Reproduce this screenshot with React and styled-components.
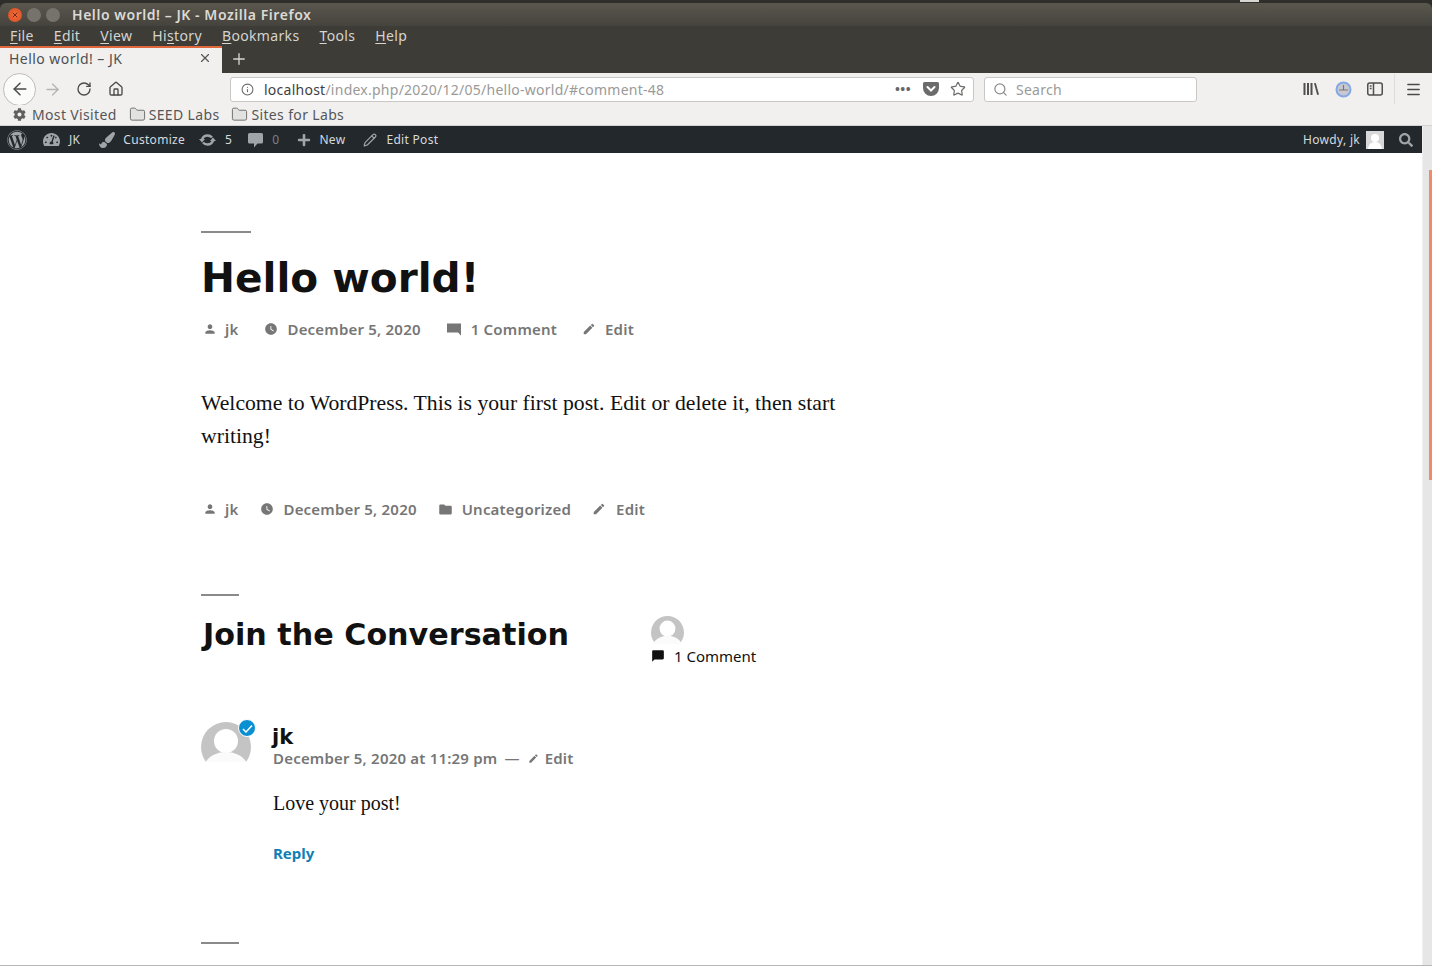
import styled, { createGlobalStyle } from 'styled-components'
import {
  ArrowLeft, ArrowRight, RotateCw, Home, Info, Star, Search, Menu, Plus, X, Folder, Pencil,
} from 'lucide-react'
import { FaWordpress, FaPaintBrush, FaTachometerAlt, FaPlus, FaSearch, FaCog } from 'react-icons/fa'
import { MdPerson, MdWatchLater, MdModeEdit, MdFolder, MdChatBubble } from 'react-icons/md'

const UI_FONT = '"Noto Sans", "Open Sans", sans-serif'
const HEAD_FONT = '"DejaVu Sans", "Noto Sans", sans-serif'
const SERIF = '"Liberation Serif", "Times New Roman", serif'

const GlobalStyle = createGlobalStyle`
  html, body { margin: 0; padding: 0; background: #fff; }
  body { font-family: ${UI_FONT}; overflow: hidden; }
  * { box-sizing: border-box; }
`

const Window = styled.div`
  width: 1432px;
  height: 966px;
  display: flex;
  flex-direction: column;
  overflow: hidden;
  background: #2f2e2b;
`

const TopStrip = styled.div`
  height: 3px;
  flex: none;
  padding-left: 1240px;
`

const TopSliver = styled.div`
  width: 19px;
  height: 2px;
  background: #d8d6d0;
`

const TitleBar = styled.div`
  height: 23px;
  flex: none;
  display: flex;
  align-items: center;
  padding: 1px 0 0 8px;
  border-radius: 6px 6px 0 0;
  background: linear-gradient(#5a574e, #45433d);
`

const WinButton = styled.span`
  width: 14px;
  height: 14px;
  border-radius: 50%;
  margin-right: 5px;
  display: flex;
  align-items: center;
  justify-content: center;
  color: ${p => (p.$close ? '#6e2a14' : '#4b4a44')};
  background: ${p => (p.$close ? 'radial-gradient(circle, #f0703f, #d9481c)' : '#75736c')};
`

const WindowTitle = styled.span`
  margin: 0 0 2px 7px;
  font-size: 14px;
  font-weight: 600;
  letter-spacing: 0.55px;
  color: #dcdad5;
  white-space: nowrap;
`

const MenuBar = styled.div`
  height: 20px;
  flex: none;
  display: flex;
  align-items: center;
  gap: 20px;
  padding: 0 0 2px 10px;
  background: #3d3c37;
`

const MenuItem = styled.span`
  font-size: 14px;
  letter-spacing: 0.35px;
  color: #d6d4cf;
  u { text-underline-offset: 2px; }
`

const TabRow = styled.div`
  height: 27px;
  flex: none;
  display: flex;
  align-items: stretch;
  background: #3d3c37;
`

const Tab = styled.div`
  width: 222px;
  display: flex;
  align-items: center;
  justify-content: space-between;
  padding: 0 10px 5px 9px;
  background: #f1f0ee;
  border-top: 2px solid #e0663c;
  font-size: 14px;
  letter-spacing: 0.45px;
  color: #4c4f55;
`

const NewTab = styled.div`
  margin-left: 8px;
  padding-bottom: 2px;
  display: flex;
  align-items: center;
  color: #d8d6d1;
`

const NavBar = styled.div`
  height: 32px;
  flex: none;
  display: flex;
  align-items: center;
  padding-left: 3px;
  background: #f1f0ee;
`

const BackButton = styled.span`
  width: 33px;
  height: 33px;
  border: 1px solid #bdbcb9;
  border-radius: 50%;
  background: #fbfbfa;
  display: flex;
  align-items: center;
  justify-content: center;
  color: #4a4a48;
`

const NavIcon = styled.span`
  width: ${p => p.$w || 32}px;
  margin-left: ${p => p.$ml || 0}px;
  display: flex;
  justify-content: center;
  color: ${p => p.$color || '#4a4a48'};
`

const Field = styled.div`
  height: 25px;
  width: ${p => p.$w}px;
  margin-left: ${p => p.$ml}px;
  display: flex;
  align-items: center;
  background: #fff;
  border: 1px solid #c9c8c5;
  border-radius: 3px;
  font-size: 14px;
  letter-spacing: 0.25px;
  color: #9a9a98;
`

const UrlText = styled.span`
  margin-left: 1px;
  flex: 1;
  b { font-weight: 400; color: #3f3f3f; }
`

const FieldIcon = styled.span`
  width: ${p => p.$w || 26}px;
  display: flex;
  justify-content: center;
  color: ${p => p.$color || '#6c6c6a'};
`

const Dots = styled.span`
  width: 32px;
  text-align: center;
  font-size: 13px;
  font-weight: 700;
  letter-spacing: 0.5px;
  color: #666;
  line-height: 10px;
`

const Divider = styled.span`
  width: 1px;
  height: 30px;
  margin-left: 3px;
  background: #dddcd9;
`

const BookmarksBar = styled.div`
  height: 21px;
  flex: none;
  display: flex;
  align-items: center;
  padding: 0 0 2px 13px;
  gap: 12px;
  background: #f1f0ee;
  border-bottom: 1px solid #d3d2cf;
`

const Bookmark = styled.span`
  display: flex;
  align-items: center;
  gap: ${p => p.$gap || 3}px;
  font-size: 14px;
  letter-spacing: 0.35px;
  color: #55565a;
  svg { color: #5f5f5d; }
`

const Lower = styled.div`
  flex: 1;
  min-height: 0;
  display: flex;
  background: #fff;
  border-bottom: 1px solid #b6b6b6;
`

const Main = styled.div`
  flex: 1;
  min-width: 0;
  display: flex;
  flex-direction: column;
`

const AdminBar = styled.div`
  height: 27px;
  flex: none;
  display: flex;
  align-items: center;
  justify-content: space-between;
  background: #23282d;
  padding: 0 9px 0 7px;
`

const AdminGroup = styled.div`
  display: flex;
  align-items: center;
`

const AdminItem = styled.span`
  display: flex;
  align-items: center;
  gap: ${p => p.$gap ?? 8}px;
  margin-right: ${p => p.$mr ?? 16}px;
  font-size: 12px;
  letter-spacing: 0.3px;
  color: ${p => (p.$dim ? '#7c8287' : '#d6dadd')};
  svg { color: #a0a5aa; }
`

const AdminAvatar = styled.span`
  display: flex;
  width: 18px;
  height: 18px;
  background: #d8d8d8;
  margin: 0 15px 0 6px;
  overflow: hidden;
`

const Page = styled.div`
  flex: 1;
  min-height: 0;
  padding: 78px 0 0 201px;
  overflow: hidden;
`

const Rule = styled.div`
  width: ${p => p.$w}px;
  height: 2px;
  margin-top: ${p => p.$mt || 0}px;
  background: #8a8a8a;
`

const PostTitle = styled.h1`
  margin: 20px 0 0 0;
  font-family: ${HEAD_FONT};
  font-size: 40.6px;
  line-height: 50px;
  font-weight: 700;
  color: #111;
`

const Meta = styled.div`
  height: 20px;
  margin-top: ${p => p.$mt}px;
  display: flex;
  align-items: center;
  padding-left: 2px;
  font-size: 15px;
  font-weight: 600;
  letter-spacing: 0.2px;
  color: #767676;
`

const MetaItem = styled.span`
  display: flex;
  align-items: center;
  gap: ${p => p.$gap}px;
  margin-right: ${p => p.$mr}px;
  white-space: nowrap;
`

const Paragraph = styled.p`
  width: 650px;
  margin: ${p => p.$mt}px 0 0;
  font-family: ${SERIF};
  font-size: ${p => p.$size}px;
  line-height: 33px;
  color: #111;
`

const ConversationHead = styled.div`
  display: flex;
  margin-top: 19px;
`

const SectionTitle = styled.h2`
  width: 450px;
  margin: 0;
  padding-left: 2px;
  font-family: ${HEAD_FONT};
  font-size: 30.2px;
  line-height: 40px;
  font-weight: 700;
  color: #111;
  white-space: nowrap;
`

const Discussion = styled.div`
  display: flex;
  flex-direction: column;
  padding-top: 1px;
`

const AvatarClip = styled.div`
  position: relative;
  width: ${p => p.$size}px;
  height: ${p => p.$h}px;
`

const Badge = styled.span`
  position: absolute;
  top: -3px;
  right: -5px;
  width: 18px;
  height: 18px;
  border-radius: 50%;
  background: #0a8fd3;
  border: 1px solid #fff;
  display: flex;
  align-items: center;
  justify-content: center;
`

const CommentCount = styled.div`
  display: flex;
  align-items: center;
  gap: 9px;
  margin-top: 2px;
  font-size: 15px;
  line-height: 20px;
  color: #111;
`

const Comment = styled.div`
  display: flex;
  gap: 22px;
  margin-top: 56px;
`

const CommentBody = styled.div`
  display: flex;
  flex-direction: column;
`

const Author = styled.div`
  height: 24px;
  margin: 2px 0 0 -1px;
  font-family: ${HEAD_FONT};
  font-size: 21px;
  line-height: 26px;
  font-weight: 700;
  color: #111;
`

const CommentMeta = styled.div`
  height: 20px;
  display: flex;
  align-items: center;
  font-size: 15px;
  font-weight: 600;
  letter-spacing: 0.2px;
  color: #767676;
`

const Dash = styled.span`
  margin: 0 8px 0 7px;
  font-weight: 400;
`

const EditLink = styled.span`
  display: flex;
  align-items: center;
  gap: 6px;
`

const Reply = styled.a`
  height: 20px;
  margin-top: 23px;
  font-size: 15px;
  line-height: 20px;
  font-weight: 700;
  color: #0f7fb5;
`

const ScrollTrack = styled.div`
  width: 10px;
  flex: none;
  padding: 44px 0 0 6px;
  background: #e6e6e6;
  border-left: 1px solid #f0f0f0;
`

const ScrollThumb = styled.div`
  width: 3px;
  height: 310px;
  background: #ee8b68;
`

function Avatar({ size, height, children }) {
  return (
    <AvatarClip $size={size} $h={height}>
      <svg width={size} height={height} viewBox={`0 0 50 ${(height / size) * 50}`}>
        <circle cx="25" cy="25" r="25" fill="#c4c4c4" />
        <circle cx="25" cy="19" r="12" fill="#fff" />
        <path d="M0 52 C2 37 13 30 25 30 C37 30 48 37 50 52 Z" fill="#fbfbfb" />
      </svg>
      {children}
    </AvatarClip>
  )
}

function PocketIcon() {
  return (
    <svg width="16" height="14" viewBox="0 0 16 14">
      <path d="M1.5 0 H14.5 A1.5 1.5 0 0 1 16 1.5 V6 A8 8 0 0 1 0 6 V1.5 A1.5 1.5 0 0 1 1.5 0 Z" fill="#6b6b6b" />
      <path d="M4.5 5 L8 8.5 L11.5 5" fill="none" stroke="#fff" strokeWidth="2" strokeLinecap="round" />
    </svg>
  )
}

function LibraryIcon() {
  return (
    <svg width="16" height="14" viewBox="0 0 16 14" fill="#4f4f4d">
      <rect x="0.5" y="1" width="2" height="12" />
      <rect x="4" y="1" width="2" height="12" />
      <rect x="7.5" y="1" width="2" height="12" />
      <path d="M11 1.3 L12.8 1 L16 12.6 L14.2 13 Z" />
    </svg>
  )
}

function SyncIcon() {
  return (
    <svg width="17" height="17" viewBox="0 0 17 17">
      <circle cx="8.5" cy="8.5" r="7" fill="#c8c8d0" stroke="#86a8e4" strokeWidth="2" />
      <path d="M8.5 4 V9 M4 9 H13" stroke="#77777a" strokeWidth="1.2" />
    </svg>
  )
}

function SidebarIcon() {
  return (
    <svg width="16" height="14" viewBox="0 0 16 14" fill="none" stroke="#4f4f4d" strokeWidth="1.5">
      <rect x="0.75" y="1" width="14.5" height="12" rx="2" />
      <path d="M6.5 1 V13" />
      <path d="M2.8 4 H4.6 M2.8 6.5 H4.6" />
    </svg>
  )
}

// wp admin "updates" loop, wider than it is tall
function UpdatesIcon() {
  return (
    <svg width="17" height="14" viewBox="0 0 17 14" fill="none">
      <path d="M3 6.5 C4 3.5 6 2.5 8.5 2.5 C10.5 2.5 12 3.3 13 4.5" stroke="currentColor" strokeWidth="2.4" />
      <path d="M14 7.5 C13 10.5 11 11.5 8.5 11.5 C6.5 11.5 5 10.7 4 9.5" stroke="currentColor" strokeWidth="2.4" />
      <path d="M0 6 L6 6 L3 9.5 Z M17 8 L11 8 L14 4.5 Z" fill="currentColor" />
    </svg>
  )
}

function AdminCommentIcon() {
  return (
    <svg width="15" height="16" viewBox="0 0 15 16" fill="currentColor">
      <path d="M1.5 1 H13.5 A1.5 1.5 0 0 1 15 2.5 V10 A1.5 1.5 0 0 1 13.5 11.5 H9.5 L6 15.5 V11.5 H1.5 A1.5 1.5 0 0 1 0 10 V2.5 A1.5 1.5 0 0 1 1.5 1 Z" />
    </svg>
  )
}

function PostCommentIcon() {
  return (
    <svg width="15" height="14" viewBox="0 0 15 14" fill="currentColor">
      <path d="M0 1.5 H14 V13.5 L11 10.5 H0 Z" />
    </svg>
  )
}

export default function App() {
  return (
    <Window>
      <GlobalStyle />
      <TopStrip><TopSliver /></TopStrip>
      <TitleBar>
        <WinButton $close><X size={8} strokeWidth={3} /></WinButton>
        <WinButton />
        <WinButton />
        <WindowTitle>Hello world! – JK - Mozilla Firefox</WindowTitle>
      </TitleBar>
      <MenuBar>
        <MenuItem><u>F</u>ile</MenuItem>
        <MenuItem><u>E</u>dit</MenuItem>
        <MenuItem><u>V</u>iew</MenuItem>
        <MenuItem>Hi<u>s</u>tory</MenuItem>
        <MenuItem><u>B</u>ookmarks</MenuItem>
        <MenuItem><u>T</u>ools</MenuItem>
        <MenuItem><u>H</u>elp</MenuItem>
      </MenuBar>
      <TabRow>
        <Tab>
          Hello world! – JK
          <X size={14} color="#555" />
        </Tab>
        <NewTab><Plus size={18} strokeWidth={1.8} /></NewTab>
      </TabRow>
      <NavBar>
        <BackButton><ArrowLeft size={20} strokeWidth={1.8} /></BackButton>
        <NavIcon $color="#b4b4b2"><ArrowRight size={19} strokeWidth={1.6} /></NavIcon>
        <NavIcon><RotateCw size={16} strokeWidth={2} /></NavIcon>
        <NavIcon><Home size={16} strokeWidth={2} /></NavIcon>
        <Field $w={744} $ml={98}>
          <FieldIcon $w={32}><Info size={13} /></FieldIcon>
          <UrlText><b>localhost</b>/index.php/2020/12/05/hello-world/#comment-48</UrlText>
          <Dots>•••</Dots>
          <FieldIcon $w={24}><PocketIcon /></FieldIcon>
          <FieldIcon $w={30}><Star size={16} strokeWidth={1.8} /></FieldIcon>
        </Field>
        <Field $w={213} $ml={10}>
          <FieldIcon $w={31} $color="#8c8c8c"><Search size={15} /></FieldIcon>
          Search
        </Field>
        <NavIcon $ml={98}><LibraryIcon /></NavIcon>
        <NavIcon><SyncIcon /></NavIcon>
        <NavIcon><SidebarIcon /></NavIcon>
        <Divider />
        <NavIcon $w={37}><Menu size={17} /></NavIcon>
      </NavBar>
      <BookmarksBar>
        <Bookmark $gap={6}><FaCog size={13} />Most Visited</Bookmark>
        <Bookmark><Folder size={17} strokeWidth={1.2} fill="#e2e2e0" />SEED Labs</Bookmark>
        <Bookmark><Folder size={17} strokeWidth={1.2} fill="#e2e2e0" />Sites for Labs</Bookmark>
      </BookmarksBar>
      <Lower>
        <Main>
          <AdminBar>
            <AdminGroup>
              <AdminItem><FaWordpress size={20} /></AdminItem>
              <AdminItem $gap={9} $mr={19}><FaTachometerAlt size={17} />JK</AdminItem>
              <AdminItem $mr={14}><FaPaintBrush size={16} />Customize</AdminItem>
              <AdminItem $gap={9} $mr={16}><UpdatesIcon />5</AdminItem>
              <AdminItem $dim $gap={9} $mr={18}><AdminCommentIcon />0</AdminItem>
              <AdminItem $mr={18}><FaPlus size={14} />New</AdminItem>
              <AdminItem $gap={9}><Pencil size={14} />Edit Post</AdminItem>
            </AdminGroup>
            <AdminGroup>
              <AdminItem $mr={0}>Howdy, jk</AdminItem>
              <AdminAvatar>
                <svg width="18" height="18" viewBox="0 0 18 18">
                  <circle cx="9" cy="7" r="4" fill="#fff" />
                  <path d="M2 18 C3 12 6 11 9 11 C12 11 15 12 16 18 Z" fill="#fff" />
                </svg>
              </AdminAvatar>
              <AdminItem $mr={0}><FaSearch size={14} /></AdminItem>
            </AdminGroup>
          </AdminBar>
          <Page>
            <Rule $w={50} />
            <PostTitle>Hello world!</PostTitle>
            <Meta $mt={16}>
              <MetaItem $gap={8} $mr={26}><MdPerson size={14} />jk</MetaItem>
              <MetaItem $gap={9} $mr={26}><MdWatchLater size={14} />December 5, 2020</MetaItem>
              <MetaItem $gap={9} $mr={25}><PostCommentIcon />1 Comment</MetaItem>
              <MetaItem $gap={9} $mr={0}><MdModeEdit size={14} />Edit</MetaItem>
            </Meta>
            <Paragraph $mt={48} $size={21.7}>
              Welcome to WordPress. This is your first post. Edit or delete it, then start writing!
            </Paragraph>
            <Meta $mt={46}>
              <MetaItem $gap={8} $mr={22}><MdPerson size={14} />jk</MetaItem>
              <MetaItem $gap={9} $mr={21}><MdWatchLater size={14} />December 5, 2020</MetaItem>
              <MetaItem $gap={9} $mr={21}><MdFolder size={15} />Uncategorized</MetaItem>
              <MetaItem $gap={10} $mr={0}><MdModeEdit size={14} />Edit</MetaItem>
            </Meta>
            <Rule $w={38} $mt={75} />
            <ConversationHead>
              <SectionTitle>Join the Conversation</SectionTitle>
              <Discussion>
                <Avatar size={33} height={28} />
                <CommentCount><MdChatBubble size={14} />1 Comment</CommentCount>
              </Discussion>
            </ConversationHead>
            <Comment>
              <Avatar size={50} height={40}>
                <Badge>
                  <svg width="11" height="9" viewBox="0 0 11 9">
                    <path d="M1 5 L4 8 L10 1.5" fill="none" stroke="#fff" strokeWidth="1.5" />
                  </svg>
                </Badge>
              </Avatar>
              <CommentBody>
                <Author>jk</Author>
                <CommentMeta>
                  December 5, 2020 at 11:29 pm
                  <Dash>—</Dash>
                  <EditLink><MdModeEdit size={11} />Edit</EditLink>
                </CommentMeta>
                <Paragraph $mt={19} $size={20}>Love your post!</Paragraph>
                <Reply>Reply</Reply>
              </CommentBody>
            </Comment>
            <Rule $w={38} $mt={79} />
          </Page>
        </Main>
        <ScrollTrack><ScrollThumb /></ScrollTrack>
      </Lower>
    </Window>
  )
}
